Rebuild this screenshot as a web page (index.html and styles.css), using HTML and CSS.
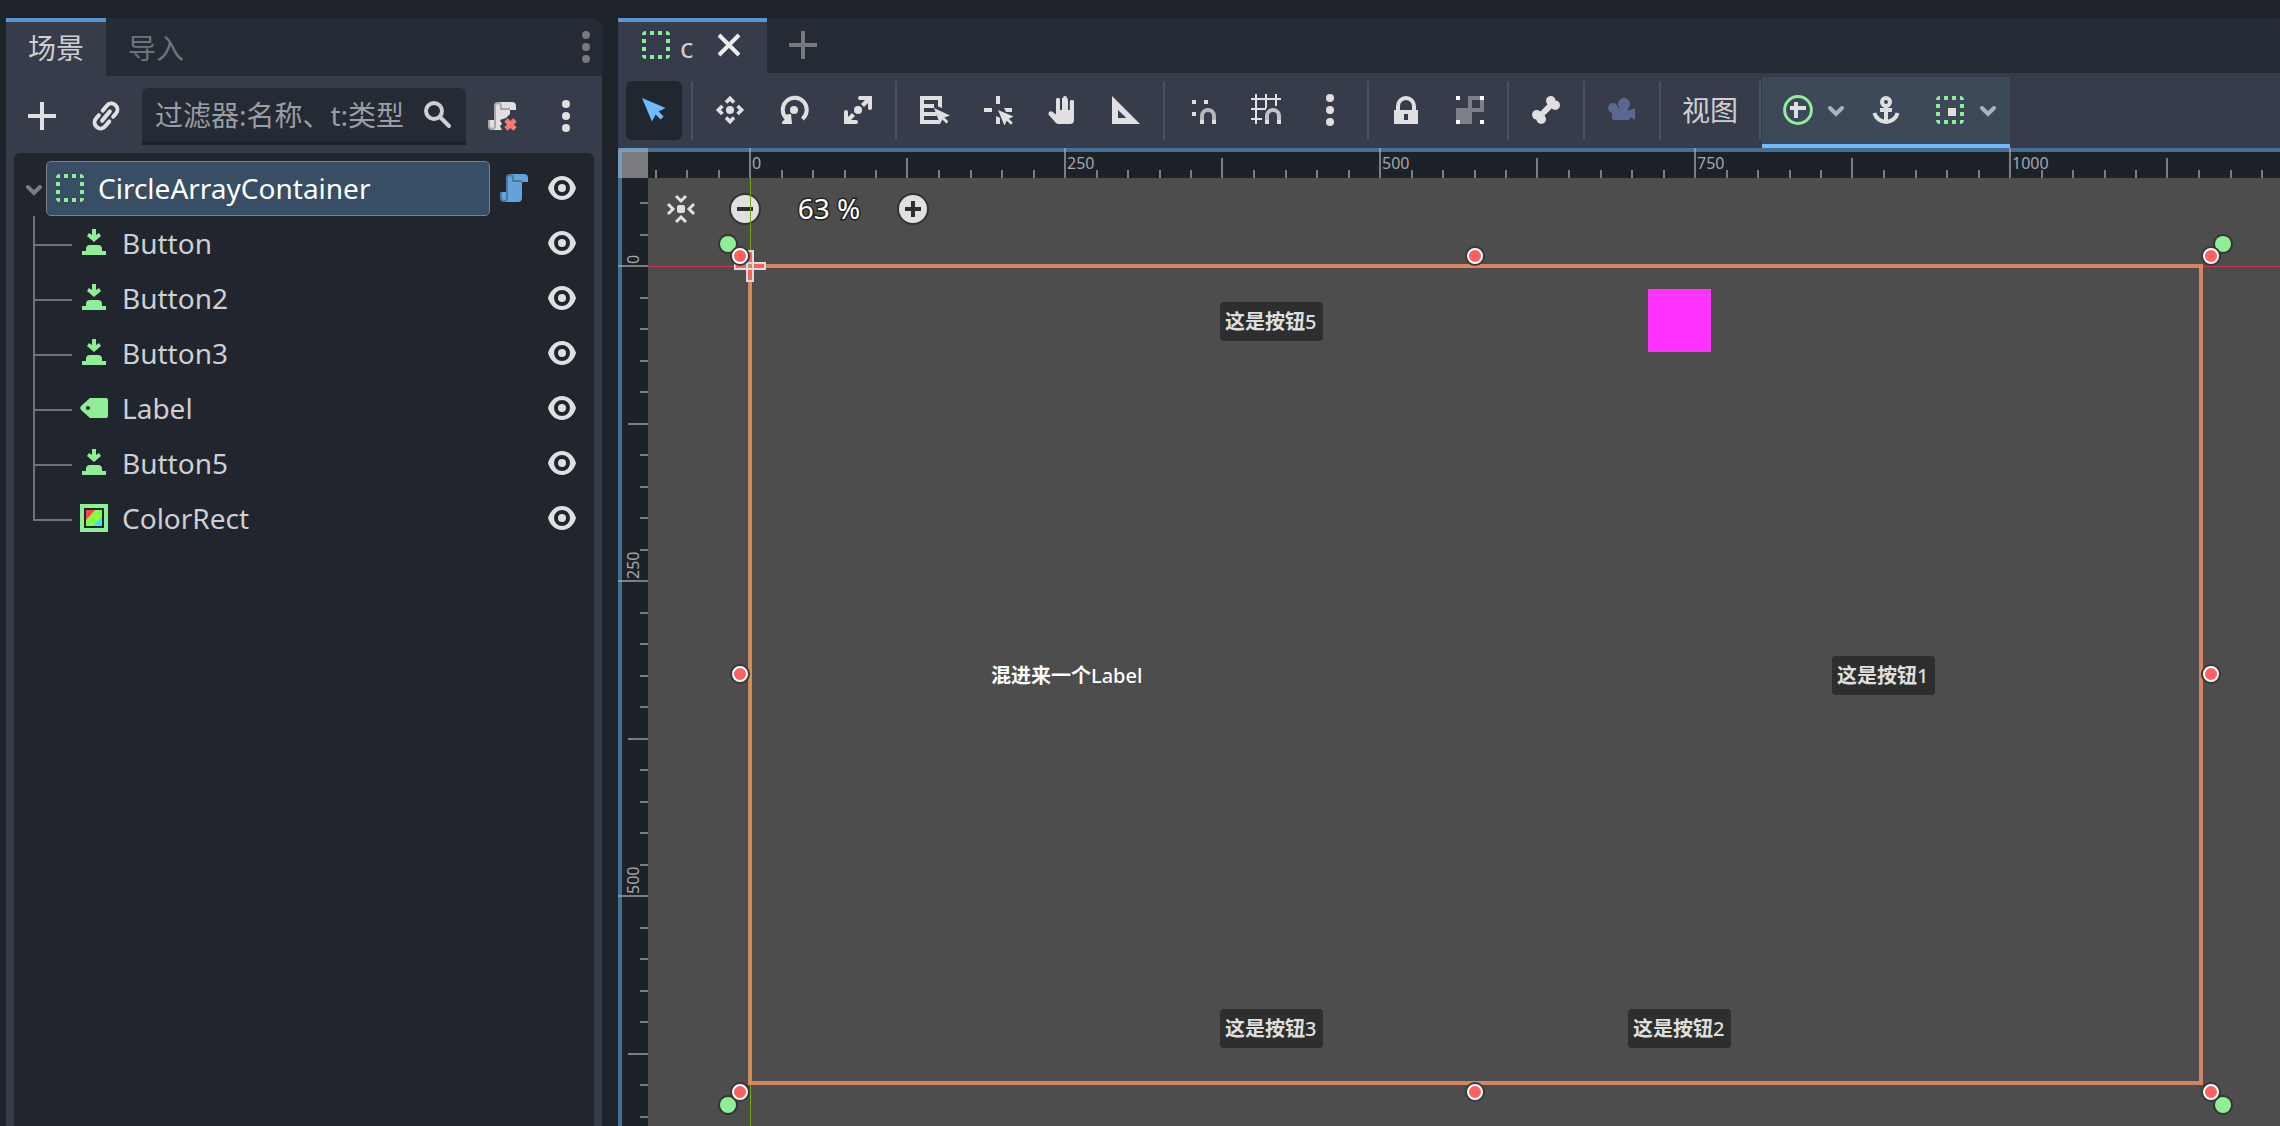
FILE: index.html
```html
<!DOCTYPE html>
<html lang="zh-CN">
<head>
<meta charset="utf-8">
<title>场景编辑器</title>
<link rel="stylesheet" href="styles.css">
</head>
<body>
<svg class="sprite" aria-hidden="true">
  <symbol id="i-add" viewBox="0 0 16 16"><path d="M7 1v6H1v2h6v6h2V9h6V7H9V1z" fill="currentColor"/></symbol>
  <symbol id="i-dots" viewBox="0 0 16 16"><g fill="currentColor"><circle cx="8" cy="2" r="2"/><circle cx="8" cy="8" r="2"/><circle cx="8" cy="14" r="2"/></g></symbol>
  <symbol id="i-link" viewBox="0 0 16 16"><g transform="rotate(-50 8 8)" fill="none" stroke="currentColor" stroke-width="2" stroke-linecap="round"><path d="M7 11H3.800a3 3 0 0 1 0-6H6"/><path d="M9 5h3.200a3 3 0 0 1 0 6H10"/><path d="M5 8h6"/></g></symbol>
  <symbol id="i-search" viewBox="0 0 16 16"><g fill="none" stroke="currentColor" stroke-width="2" stroke-linecap="round"><circle cx="6" cy="6" r="4"/><path d="M9 9l4.500 4.500"/></g></symbol>
  <symbol id="i-script" viewBox="0 0 16 16"><path d="M6 1a2 2 0 0 0-2 2v7H1v3a2 2 0 0 0 2 2h7a2 2 0 0 0 2-2V5h3V3a2 2 0 0 0-2-2z" fill="currentColor"/><path d="M1.500 10v3a1.500 1.500 0 0 0 3 0V3a1.500 1.500 0 0 1 3 0v1.500H12" fill="none" stroke="#000" stroke-opacity=".25"/></symbol>
  <symbol id="i-script-remove" viewBox="0 0 16 16"><path d="M6 1a2 2 0 0 0-2 2v7H1v3a2 2 0 0 0 2 2h5l-1-2 1-1-1-2 3-1 2-2V5h3V3a2 2 0 0 0-2-2z" fill="currentColor"/><path d="M1.500 10v3a1.500 1.500 0 0 0 3 0V3a1.500 1.500 0 0 1 3 0v1.500H12" fill="none" stroke="#000" stroke-opacity=".25"/><path d="M10 10l4.500 4.500m0-4.500L10 14.500" stroke="#ff786b" stroke-width="2.400"/></symbol>
  <symbol id="i-eye" viewBox="0 0 16 16"><path fill="currentColor" fill-rule="evenodd" d="M8 2C4.500 2 2 4.700 1 8c1 3.300 3.500 6 7 6s6-2.700 7-6c-1-3.300-3.500-6-7-6zm0 2a4 4 0 1 1 0 8 4 4 0 0 1 0-8z"/><circle cx="8" cy="8" r="2" fill="currentColor"/></symbol>
  <symbol id="i-container" viewBox="0 0 16 16"><path fill="currentColor" d="M3 1v2H1a2 2 0 0 1 2-2zM5 1h2v2H5zM9 1h2v2H9zM13 1a2 2 0 0 1 2 2h-2zM1 5h2v2H1zM1 9h2v2H1zM13 5h2v2h-2zM13 9h2v2h-2zM1 13h2v2a2 2 0 0 1-2-2zM5 13h2v2H5zM9 13h2v2H9zM13 13h2a2 2 0 0 1-2 2z"/></symbol>
  <symbol id="i-button" viewBox="0 0 16 16"><path fill="currentColor" d="M7 1h2v3l1.500-1 1 1.500L8 7.500l-3.500-3 1-1.500L7 4zM2 14v-2h2v-1a2 2 0 0 1 2-2h4a2 2 0 0 1 2 2v1h2v2z"/></symbol>
  <symbol id="i-label" viewBox="0 0 16 16"><path fill="currentColor" fill-rule="evenodd" d="M6 3L1.500 7a1.500 1.500 0 0 0 0 2L6 13h8a1 1 0 0 0 1-1V4a1 1 0 0 0-1-1zM5 7a1 1 0 1 1 0 2 1 1 0 0 1 0-2z"/></symbol>
  <symbol id="i-colorrect" viewBox="0 0 16 16"><path d="M2 2h12v12H2z" fill="none" stroke="currentColor" stroke-width="2"/><path d="M4 4h8v8H4z" fill="#80ff45"/><path d="M4 4h4.500L4 9z" fill="#ff4545"/><path d="M12 12V7.500L7.500 12z" fill="#45d7ff"/></symbol>
  <symbol id="i-chevron" viewBox="0 0 8 8"><path d="M1 3l3 3 3-3" fill="none" stroke="currentColor" stroke-width="2" stroke-linecap="round"/></symbol>
  <symbol id="i-close" viewBox="0 0 16 16"><path d="M3 3l10 10M13 3L3 13" stroke="currentColor" stroke-width="2"/></symbol>
  <symbol id="i-select" viewBox="0 0 16 16"><path fill="currentColor" d="M2 2l5 11.700 1.800-3.400 2.500 2.500 1.500-1.500-2.500-2.500 3.500-1.800z"/></symbol>
  <symbol id="i-move" viewBox="0 0 16 16"><circle cx="8" cy="8" r="2" fill="currentColor"/><g fill="none" stroke="currentColor" stroke-width="1.800"><path d="M6 4.200l2-2 2 2M6 11.800l2 2 2-2M4.200 6l-2 2 2 2M11.800 6l2 2-2 2"/></g></symbol>
  <symbol id="i-rotate" viewBox="0 0 16 16"><circle cx="8" cy="8" r="2" fill="currentColor"/><path d="M4.200 12.200a6 6 0 1 1 8 .300" fill="none" stroke="currentColor" stroke-width="2"/><path d="M2 15V14l1.500-1.500L2 10.500l4.500-.500.500 5z" fill="currentColor"/></symbol>
  <symbol id="i-scale" viewBox="0 0 16 16"><circle cx="8" cy="8" r="2" fill="currentColor"/><path d="M8 2a1 1 0 0 1 1-1h6v6a1 1 0 0 1-2 0V4.500l-2 2L9.500 5l2-2H9a1 1 0 0 1-1-1zM8 14a1 1 0 0 1-1 1H1V9a1 1 0 0 1 2 0v2.500l2-2L6.500 11l-2 2H7a1 1 0 0 1 1 1z" fill="currentColor"/></symbol>
  <symbol id="i-list" viewBox="0 0 16 16"><path fill="currentColor" d="M1 1h11v6L10 6.300V3H3v2h5v1.500L8.300 7H3v2h5.800l.800 2H3v2h7.300l.700 2H1zM8 7l3 8 1.200-2.200 2 2 1-1-2-2L16 10.800z"/></symbol>
  <symbol id="i-pivot" viewBox="0 0 16 16"><path fill="currentColor" d="M7 1h2v4H7zM1 7h4v2H1zM11 7h4v2h-3zM7 11l2 1v3H7zM8 8l3.200 7.800 1.200-2.400 2 2 1-1-2-2 2.400-1.200z"/></symbol>
  <symbol id="i-hand" viewBox="0 0 16 16"><path fill="currentColor" d="M8 2v6H7V3a1 1 0 0 0-2 0v7.300L3 8.800a1.200 1.200 0 0 0-1.600 1.700L5 14.500q.500.500 1.200.500H12a2 2 0 0 0 2-2V4a1 1 0 0 0-2 0v4h-1V3a1 1 0 0 0-1-1v6H9V2z"/><path d="M9.500 2v7M6 3v7M12.900 4v7" stroke="currentColor" stroke-width="2" stroke-linecap="round"/></symbol>
  <symbol id="i-ruler" viewBox="0 0 16 16"><path fill="currentColor" fill-rule="evenodd" d="M1 1v14h14zM4 8l4.200 4H4z"/></symbol>
  <symbol id="i-snap" viewBox="0 0 16 16"><path fill="currentColor" d="M3 3h2v2H3zM9 3h2v2H9zM3 9h2v2H3zM7 13h2v2H7zM13 13h2v2h-2z"/><path d="M8 13v-2a3 3 0 0 1 6 0v2" fill="none" stroke="currentColor" stroke-opacity=".75" stroke-width="2"/></symbol>
  <symbol id="i-grid" viewBox="0 0 16 16"><path fill="none" stroke="currentColor" d="M3 0v15M8 0v7M13 0v6M.5 2.500h15M.5 7.500H8M.5 12.500H6"/><path fill="currentColor" d="M7.500 13h2v2h-2zM13.500 13h2v2h-2z"/><path d="M8.500 13v-2a3 3 0 0 1 6 0v2" fill="none" stroke="#c0c2c6" stroke-width="2"/></symbol>
  <symbol id="i-lock" viewBox="0 0 16 16"><path d="M4 8V6a4 4 0 0 1 8 0v2" fill="none" stroke="currentColor" stroke-width="2"/><path fill="currentColor" fill-rule="evenodd" d="M2 8h12v7H2zM7 10v3h2v-3z"/></symbol>
  <symbol id="i-group" viewBox="0 0 16 16"><path fill="#7c8089" fill-rule="evenodd" d="M7 1h8v8H9v6H1V7h6zM9 3v4h4V3z"/><path fill="#fff" d="M1 1h2v2H1zM13 1h2v2h-2zM1 13h2v2H1zM13 13h2v2h-2z"/></symbol>
  <symbol id="i-bone" viewBox="0 0 16 16"><path d="M4.500 11.500l7-7" stroke="currentColor" stroke-width="3"/><g fill="currentColor"><circle cx="10.400" cy="3.400" r="2.400"/><circle cx="12.600" cy="5.600" r="2.400"/><circle cx="3.400" cy="10.400" r="2.400"/><circle cx="5.600" cy="12.600" r="2.400"/></g></symbol>
  <symbol id="i-camera" viewBox="0 0 16 16"><g fill="currentColor"><circle cx="3.500" cy="7" r="2.500"/><circle cx="9" cy="5" r="3"/><path d="M3 7h8v1.500L14.500 7v6L12 11.500V12a1 1 0 0 1-1 1H4a1 1 0 0 1-1-1z"/></g></symbol>
  <symbol id="i-sizeflags" viewBox="0 0 16 16"><circle cx="8" cy="8" r="6.700" fill="none" stroke="#8eef97" stroke-width="1.500"/><path d="M6 4h2v2h4v2H8v4H6V8H4V6h2z" fill="currentColor"/></symbol>
  <symbol id="i-anchor" viewBox="0 0 16 16"><g fill="none" stroke="currentColor" stroke-width="2"><circle cx="8" cy="4" r="2"/><path d="M8 6v8M5 8h6M2.200 9.500a6 6 0 0 0 11.600 0"/></g></symbol>
  <symbol id="i-center" viewBox="0 0 16 16"><rect x="6" y="6" width="4" height="4" rx="1" fill="currentColor"/><g fill="none" stroke="currentColor" stroke-width="1.500"><path d="M5.500 1.500L8 4l2.500-2.500M5.500 14.500L8 12l2.500 2.500M1.500 5.500L4 8l-2.500 2.500M14.500 5.500L12 8l2.500 2.500"/></g></symbol>
  <symbol id="i-minus" viewBox="0 0 16 16"><circle cx="8" cy="8" r="7.500" fill="currentColor" stroke="#333"/><path d="M4 7h8v2H4z" fill="#2e2e2e"/></symbol>
  <symbol id="i-plus" viewBox="0 0 16 16"><circle cx="8" cy="8" r="7.500" fill="currentColor" stroke="#333"/><path d="M7 4h2v3h3v2H9v3H7V9H4V7h3z" fill="#2e2e2e"/></symbol>
</svg>

<div class="editor">
  <aside class="dock">
    <nav class="tabs">
      <button class="tab tab-active">场景</button>
      <button class="tab">导入</button>
      <button class="tabs-menu" aria-label="面板选项"><svg class="icon"><use href="#i-dots"/></svg></button>
    </nav>
    <div class="dock-tools">
      <button class="tool" aria-label="添加节点"><svg class="icon"><use href="#i-add"/></svg></button>
      <button class="tool" aria-label="实例化场景"><svg class="icon"><use href="#i-link"/></svg></button>
      <label class="search">
        <input type="text" placeholder="过滤器:名称、t:类型" aria-label="过滤节点">
        <svg class="icon"><use href="#i-search"/></svg>
      </label>
      <button class="tool" aria-label="移除脚本"><svg class="icon"><use href="#i-script-remove"/></svg></button>
      <button class="tool" aria-label="更多"><svg class="icon"><use href="#i-dots"/></svg></button>
    </div>
    <div class="tree">
      <div class="row">
        <svg class="fold"><use href="#i-chevron"/></svg>
        <div class="node node-selected"><svg class="icon green"><use href="#i-container"/></svg><span>CircleArrayContainer</span></div>
        <button class="script" aria-label="脚本"><svg class="icon"><use href="#i-script"/></svg></button>
        <button class="eye" aria-label="可见性"><svg class="icon"><use href="#i-eye"/></svg></button>
      </div>
      <ul class="children">
        <li class="row"><div class="node"><svg class="icon green"><use href="#i-button"/></svg><span>Button</span></div><button class="eye" aria-label="可见性"><svg class="icon"><use href="#i-eye"/></svg></button></li>
        <li class="row"><div class="node"><svg class="icon green"><use href="#i-button"/></svg><span>Button2</span></div><button class="eye" aria-label="可见性"><svg class="icon"><use href="#i-eye"/></svg></button></li>
        <li class="row"><div class="node"><svg class="icon green"><use href="#i-button"/></svg><span>Button3</span></div><button class="eye" aria-label="可见性"><svg class="icon"><use href="#i-eye"/></svg></button></li>
        <li class="row"><div class="node"><svg class="icon green"><use href="#i-label"/></svg><span>Label</span></div><button class="eye" aria-label="可见性"><svg class="icon"><use href="#i-eye"/></svg></button></li>
        <li class="row"><div class="node"><svg class="icon green"><use href="#i-button"/></svg><span>Button5</span></div><button class="eye" aria-label="可见性"><svg class="icon"><use href="#i-eye"/></svg></button></li>
        <li class="row"><div class="node"><svg class="icon green"><use href="#i-colorrect"/></svg><span>ColorRect</span></div><button class="eye" aria-label="可见性"><svg class="icon"><use href="#i-eye"/></svg></button></li>
      </ul>
    </div>
  </aside>

  <main class="main">
    <nav class="scene-tabs">
      <div class="scene-tab"><svg class="icon green"><use href="#i-container"/></svg><span class="scene-name">c</span><button class="close" aria-label="关闭"><svg class="icon"><use href="#i-close"/></svg></button></div>
      <button class="new-tab" aria-label="新建场景"><svg class="icon"><use href="#i-add"/></svg></button>
    </nav>
    <div class="toolbar">
      <button class="tool tool-active" aria-label="选择"><svg class="icon"><use href="#i-select"/></svg></button>
      <span class="sep"></span>
      <button class="tool" aria-label="移动"><svg class="icon"><use href="#i-move"/></svg></button>
      <button class="tool" aria-label="旋转"><svg class="icon"><use href="#i-rotate"/></svg></button>
      <button class="tool" aria-label="缩放"><svg class="icon"><use href="#i-scale"/></svg></button>
      <span class="sep"></span>
      <button class="tool" aria-label="列表选择"><svg class="icon"><use href="#i-list"/></svg></button>
      <button class="tool" aria-label="轴心"><svg class="icon"><use href="#i-pivot"/></svg></button>
      <button class="tool" aria-label="平移"><svg class="icon"><use href="#i-hand"/></svg></button>
      <button class="tool" aria-label="标尺"><svg class="icon"><use href="#i-ruler"/></svg></button>
      <span class="sep"></span>
      <button class="tool" aria-label="智能吸附"><svg class="icon"><use href="#i-snap"/></svg></button>
      <button class="tool" aria-label="网格吸附"><svg class="icon"><use href="#i-grid"/></svg></button>
      <button class="tool" aria-label="吸附选项"><svg class="icon"><use href="#i-dots"/></svg></button>
      <span class="sep"></span>
      <button class="tool" aria-label="锁定"><svg class="icon"><use href="#i-lock"/></svg></button>
      <button class="tool" aria-label="编组"><svg class="icon"><use href="#i-group"/></svg></button>
      <span class="sep"></span>
      <button class="tool" aria-label="骨骼"><svg class="icon"><use href="#i-bone"/></svg></button>
      <span class="sep"></span>
      <button class="tool tool-camera" aria-label="相机"><svg class="icon"><use href="#i-camera"/></svg></button>
      <span class="sep"></span>
      <button class="view-menu">视图</button>
      <span class="sep"></span>
      <div class="context">
        <button class="drop" aria-label="尺寸"><svg class="icon"><use href="#i-sizeflags"/></svg><svg class="arrow"><use href="#i-chevron"/></svg></button>
        <button class="tool" aria-label="锚点"><svg class="icon"><use href="#i-anchor"/></svg></button>
        <button class="drop" aria-label="容器"><svg class="icon" viewBox="0 0 16 16"><use class="green" href="#i-container"/><path fill="#e0e0e0" d="M7 7h4v4H7z"/></svg><svg class="arrow"><use href="#i-chevron"/></svg></button>
      </div>
    </div>

    <div class="viewport">
      <div class="corner"></div>
      <svg class="ruler">
        <defs><pattern id="ticks-x" patternUnits="userSpaceOnUse" x="101" y="0" width="315" height="30"><path fill="#7b7e83" d="M0 0h2v30H0zM32 22h2v8h-2zM63 22h2v8h-2zM95 22h2v8h-2zM126 22h2v8h-2zM157 10h2v20h-2zM189 22h2v8h-2zM221 22h2v8h-2zM252 22h2v8h-2zM284 22h2v8h-2z"/></pattern></defs>
        <rect width="100%" height="30" fill="url(#ticks-x)"/>
        <text x="104" y="21">0</text><text x="419" y="21">250</text><text x="734" y="21">500</text><text x="1049" y="21">750</text><text x="1364" y="21">1000</text>
      </svg>
      <svg class="ruler">
        <defs><pattern id="ticks-y" patternUnits="userSpaceOnUse" x="0" y="87" width="30" height="315"><path fill="#7b7e83" d="M0 0h30v2H0zM22 32h8v2h-8zM22 63h8v2h-8zM22 95h8v2h-8zM22 126h8v2h-8zM10 158h20v2H10zM22 189h8v2h-8zM22 221h8v2h-8zM22 252h8v2h-8zM22 284h8v2h-8z"/></pattern></defs>
        <rect width="30" height="100%" fill="url(#ticks-y)"/>
        <text transform="translate(21 86) rotate(-90)">0</text><text transform="translate(21 401) rotate(-90)">250</text><text transform="translate(21 716) rotate(-90)">500</text>
      </svg>
      <div class="canvas">
        <div class="zoom">
          <button class="zoom-btn zoom-center" aria-label="居中"><svg class="icon"><use href="#i-center"/></svg></button>
          <button class="zoom-btn" aria-label="缩小"><svg class="icon"><use href="#i-minus"/></svg></button>
          <button class="zoom-value">63 %</button>
          <button class="zoom-btn" aria-label="放大"><svg class="icon"><use href="#i-plus"/></svg></button>
        </div>
        <div class="axis-x"></div>
        <div class="axis-y"></div>
        <div class="board">
          <button class="item item-button" style="left:1082px;top:390px"><b>这是按钮</b>1</button>
          <button class="item item-button" style="left:878px;top:743px"><b>这是按钮</b>2</button>
          <button class="item item-button" style="left:470px;top:743px"><b>这是按钮</b>3</button>
          <span class="item item-label" style="left:241px;top:390px"><b>混进来一个</b>Label</span>
          <button class="item item-button" style="left:470px;top:36px"><b>这是按钮</b>5</button>
          <span class="item item-rect" style="left:898px;top:23px"></span>
          <svg class="gizmo">
            <path class="pivot" d="M-15-3h12v-12h6v12h12v6h-12v12h-6v-12h-12z"/>
            <path class="pivot-lines" d="M-3-3h6v6h-6z"/>
          </svg>
          <i class="anchor a-tl"></i><i class="anchor a-tr"></i><i class="anchor a-bl"></i><i class="anchor a-br"></i>
          <i class="grip top left"></i><i class="grip top mid"></i><i class="grip top right"></i>
          <i class="grip center left"></i><i class="grip center right"></i>
          <i class="grip bottom left"></i><i class="grip bottom mid"></i><i class="grip bottom right"></i>
        </div>
      </div>
    </div>
  </main>
</div>
</body>
</html>
```
FILE: styles.css
```css
* { box-sizing: border-box; }

body {
  margin: 0;
  background: #1e222a;
  color: #cdcfd2;
  font: 28px/38px "Noto Sans", "Noto Sans CJK SC", sans-serif;
  overflow: hidden;
}

button {
  display: flex;
  align-items: center;
  justify-content: center;
  margin: 0;
  padding: 0;
  border: 0;
  background: none;
  color: inherit;
  font: inherit;
}

.sprite { position: absolute; width: 0; height: 0; }
.icon { display: block; flex: none; width: 32px; height: 32px; }
.green { color: #8eef97; }

.editor {
  display: flex;
  gap: 16px;
  height: 100vh;
  padding: 18px 0 0 6px;
}

/* scene dock */
.dock {
  flex: none;
  display: flex;
  flex-direction: column;
  width: 596px;
  border-radius: 0 12px 0 0;
  background: #363c4a;
  overflow: hidden;
}

.tabs { display: flex; height: 58px; background: #252b34; }
.tab { padding: 0 22px 2px; border-top: 4px solid transparent; color: #6f747c; }
.tab-active { border-top-color: #5a94cb; background: #363c4a; color: #cdcfd2; }
.tabs-menu { margin-left: auto; color: #77797e; }

.dock-tools { display: flex; gap: 8px; height: 77px; padding: 12px 8px 8px; }

.tool {
  flex: none;
  width: 56px;
  padding-bottom: 1px;
  border-radius: 6px;
  color: #e0e0e0;
}
.tool-active { background: #21272f; color: #70baff; }

.search {
  flex: 1;
  display: flex;
  align-items: center;
  min-width: 0;
  padding: 0 12px 0 13px;
  border-bottom: 4px solid #1e2229;
  border-radius: 6px 6px 0 0;
  background: #252b34;
  color: #cdcfd2;
}
.search input {
  flex: 1;
  min-width: 0;
  padding: 0;
  border: 0;
  background: none;
  color: inherit;
  font: inherit;
}
.search input::placeholder { color: #9a9da2; opacity: 1; }

.tree {
  flex: 1;
  margin: 0 8px;
  padding-top: 8px;
  border-radius: 6px 6px 0 0;
  background: #21252d;
}
.row { display: flex; align-items: center; height: 55px; padding: 0 16px 0 12px; }
.fold { flex: none; width: 16px; height: 16px; margin-right: 4px; color: #7a7c81; }
.node {
  flex: 1;
  display: flex;
  align-items: center;
  gap: 12px;
  height: 55px;
  padding: 0 0 1px 8px;
}
.node-selected {
  padding-left: 7px;
  border: 1px solid #75818e;
  border-radius: 5px;
  background: #384e65;
  color: #fff;
}
.script { margin-left: 8px; padding-bottom: 1px; color: #64a2db; }
.eye { margin-left: 16px; padding-bottom: 1px; color: #e0e0e0; }

.children { margin: 0 0 0 19px; padding: 0; list-style: none; }
.children .row { position: relative; padding-left: 37px; }
.children .row::before {
  content: "";
  position: absolute;
  left: 0;
  top: 0;
  width: 37px;
  height: 28px;
  border: solid #6f7278;
  border-width: 0 0 2px 2px;
}
.children .row:not(:last-child)::after {
  content: "";
  position: absolute;
  left: 0;
  top: 28px;
  bottom: 0;
  width: 2px;
  background: #6f7278;
}

/* scene tabs and toolbar */
.main { flex: 1; display: flex; flex-direction: column; min-width: 0; }
.scene-tabs { display: flex; height: 55px; background: #252b34; }
.scene-tab {
  display: flex;
  align-items: center;
  padding: 0 22px 2px;
  border-top: 4px solid #5a94cb;
  background: #363c4a;
}
.scene-name { margin: 0 20px 0 8px; }
.close { color: #ededee; }
.new-tab { margin-left: 20px; padding-bottom: 1px; color: #77797d; }
.scene-tab .icon { margin-top: -3px; }

.toolbar { display: flex; gap: 8px; height: 75px; padding: 8px; background: #363c4a; }
.sep { flex: none; width: 4px; border: solid transparent; border-width: 0 1px; background: #4c515d content-box; }
.tool-camera { color: #5a6890; }
.view-menu { width: 80px; padding-bottom: 1px; }
.context {
  display: flex;
  gap: 8px;
  margin: -4px 0 -8px -8px;
  padding: 4px 8px;
  border-bottom: 4px solid #70baff;
  background: #3d4859;
}
.drop { gap: 14px; width: 80px; padding: 0 6px 1px 12px; color: #e0e0e0; }
.arrow { flex: none; width: 16px; height: 16px; color: #aeb2b9; }

/* canvas viewport */
.viewport {
  position: relative;
  flex: 1;
  display: grid;
  grid-template: 30px 1fr / 30px 1fr;
  min-height: 0;
}
.viewport::after {
  content: "";
  position: absolute;
  inset: 0;
  border: solid rgba(112, 186, 255, .5);
  border-width: 4px 0 0 4px;
  border-radius: 4px 0 0 0;
  pointer-events: none;
}
.corner { background: #7b7c80; }
.ruler {
  display: block;
  width: 100%;
  height: 100%;
  background: #1d2229;
  fill: #a4a6a9;
  font-size: 16px;
}

.canvas { position: relative; background: #4d4d4d; overflow: hidden; }
.zoom { display: flex; align-items: center; padding: 11px 17px; color: #e0e0e0; }
.zoom-btn { width: 32px; padding-top: 1px; }
.zoom-center { margin-right: 32px; }
.zoom-value {
  width: 136px;
  color: #fff;
  -webkit-text-stroke: 3px #222;
  paint-order: stroke fill;
}

.axis-x { position: absolute; left: 0; right: 0; top: 88px; height: 1px; background: #c33a55; }
.axis-y { position: absolute; top: 0; bottom: 0; left: 102px; width: 1px; background: #76a617; }

.board { position: absolute; left: 102px; top: 88px; width: 1451px; height: 817px; }
.board::before {
  content: "";
  position: absolute;
  inset: -2px;
  border: 4px solid rgba(243, 148, 107, .8);
}

.item { position: absolute; font-size: 20px; font-weight: 500; line-height: 40px; }
.item-button {
  width: 103px;
  height: 39px;
  padding: 1px 5px 0;
  border-radius: 4px;
  background: #2e2e2e;
  color: #dfdfdf;
  justify-content: flex-start;
}
.item-label { color: #fff; }
.item-rect { width: 63px; height: 63px; background: #ff33ff; }

.gizmo { position: absolute; left: 0; top: 0; width: 1px; height: 1px; overflow: visible; }
.pivot { fill: #ff5f5f; stroke: #dcdcdc; stroke-width: 2px; }
.pivot-lines { fill: #cd8a6c; stroke: #dcdcdc; stroke-width: 2px; }

.grip, .anchor { position: absolute; border-radius: 50%; }
.grip {
  width: 16px;
  height: 16px;
  border: 2px solid #fff;
  background: #ff5f5f;
  box-shadow: 0 0 0 2px #383838;
}
.top { top: -18px; }
.center { top: calc(50% - 9px); }
.bottom { bottom: -17px; }
.left { left: -18px; }
.mid { left: calc(50% - 9px); }
.right { right: -18px; }

.anchor { width: 16px; height: 16px; background: #8eef97; box-shadow: 0 0 0 2px #333; }
.a-tl { left: -30px; top: -30px; }
.a-tr { right: -30px; top: -30px; }
.a-bl { left: -30px; bottom: -30px; }
.a-br { right: -30px; bottom: -30px; }
```
